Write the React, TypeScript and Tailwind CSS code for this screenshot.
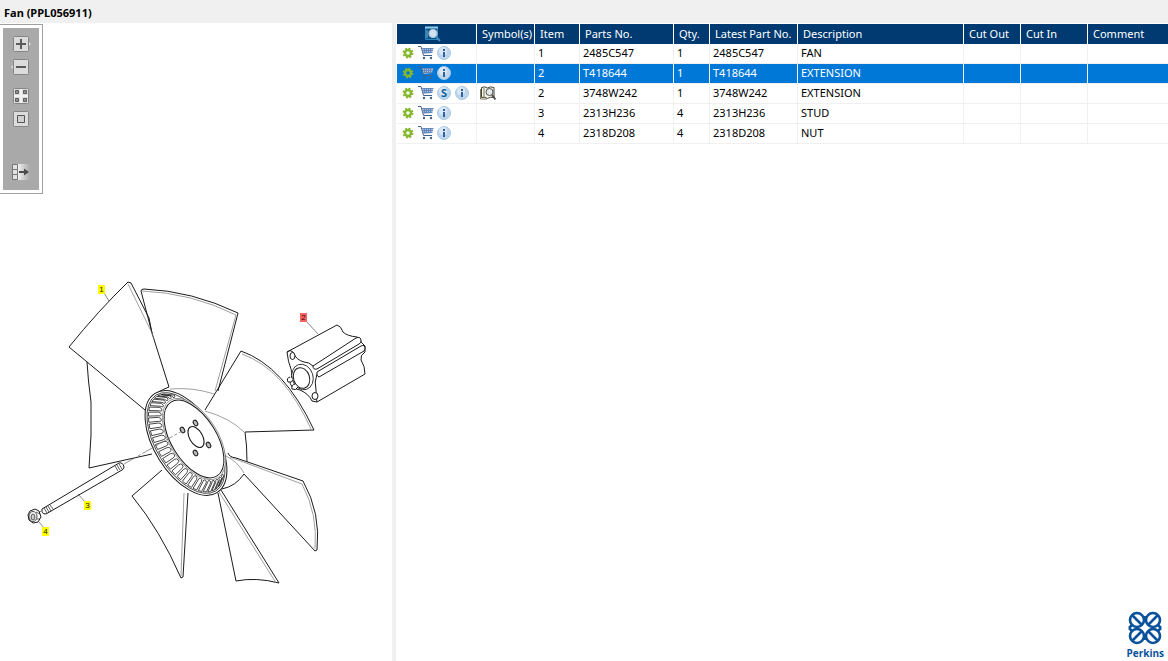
import {useState} from "react";

type Part = {
  item: string;
  partNo: string;
  qty: string;
  description: string;
  service?: boolean;
  symbol?: boolean;
};

const parts: Part[] = [
  {item: '1', partNo: '2485C547', qty: '1', description: 'FAN'},
  {item: '2', partNo: 'T418644', qty: '1', description: 'EXTENSION'},
  {item: '2', partNo: '3748W242', qty: '1', description: 'EXTENSION', service: true, symbol: true},
  {item: '3', partNo: '2313H236', qty: '4', description: 'STUD'},
  {item: '4', partNo: '2318D208', qty: '4', description: 'NUT'},
];

const toolButton = "block h-[18px] w-5 cursor-pointer";

function Tile() {
  return <rect x="2.5" y="1.5" width="15" height="15" rx="1" fill="#dcdcdc" stroke="#858585"/>;
}

function Toolbar() {
  return (
    <div className="absolute left-0 top-px border border-l-0 border-[#a0a0a0] bg-white p-[3px]">
      <div className="flex h-[162px] w-9 flex-col items-center bg-[#a9a9a9] pt-[7px]">
        <button type="button" aria-label="Zoom in" className={toolButton}>
          <svg width="20" height="18">
            <path d="M17 6l3 3-3 3z" fill="#dcdcdc"/>
            <Tile/>
            <path d="M5 9h10M10 4v10" stroke="#5a5a5a" strokeWidth="2"/>
          </svg>
        </button>
        <button type="button" aria-label="Zoom out" className={toolButton + " mt-[5px]"}>
          <svg width="20" height="18">
            <path d="M3 6L0 9l3 3z" fill="#dcdcdc"/>
            <Tile/>
            <path d="M5 9h10" stroke="#5a5a5a" strokeWidth="2"/>
          </svg>
        </button>
        <button type="button" aria-label="Fit to page" className={toolButton + " mt-[11px]"}>
          <svg width="20" height="18">
            <Tile/>
            <path d="M10 2v14M3 9h14" stroke="#f2f2f2" strokeWidth="2"/>
            <path d="M4.500 3.500h3v3h-3zM12.500 3.500h3v3h-3zM4.500 11.500h3v3h-3zM12.500 11.500h3v3h-3z" fill="#909090" stroke="#5f5f5f"/>
          </svg>
        </button>
        <button type="button" aria-label="Original size" className={toolButton + " mt-[5px]"}>
          <svg width="20" height="18">
            <Tile/>
            <path d="M6.500 5.500h7v7h-7z" fill="#d0d0d0" stroke="#555"/>
          </svg>
        </button>
        <button type="button" aria-label="Toggle list" className={toolButton + " mt-[35px]"}>
          <svg width="20" height="18">
            <defs>
              <linearGradient id="fade">
                <stop offset="0" stopColor="#f0f0f0"/>
                <stop offset="1" stopColor="#a9a9a9"/>
              </linearGradient>
            </defs>
            <path d="M7 1h12v16H7z" fill="url(#fade)"/>
            <path d="M1.500 1.500h5v5h-5zM1.500 6.500h5v5h-5zM1.500 11.500h5v5h-5z" fill="#e2e2e2" stroke="#777"/>
            <path d="M8 9h6" stroke="#4a4a4a" strokeWidth="2"/>
            <path d="M13 5.500L18 9l-5 3.500z" fill="#4a4a4a"/>
          </svg>
        </button>
      </div>
    </div>
  );
}

// point on an ellipse tilted like the hub, t in degrees from the long axis
function onEllipse(cx: number, cy: number, a: number, b: number, t: number) {
  const tilt = 58 * Math.PI / 180;
  const r = t * Math.PI / 180;
  const u = a * Math.cos(r);
  const v = b * Math.sin(r);
  return [cx + u * Math.cos(tilt) - v * Math.sin(tilt), cy + u * Math.sin(tilt) + v * Math.cos(tilt)];
}

function slot(t: number) {
  const p = (v: number[]) => v.map(n => n.toFixed(1)).join(' ');
  const outer = (d: number) => p(onEllipse(186, 443, 55, 28, t + d));
  const inner = (d: number) => p(onEllipse(193, 439, 49, 27, t + d));
  const tip = (d: number) => p(onEllipse(193.5, 439, 46.5, 24.5, t + d));
  return `M${outer(-2.8)}L${inner(-3)}Q${tip(-2.8)} ${tip(0)}Q${tip(2.8)} ${inner(3)}L${outer(2.8)}Z`;
}

const slots = Array.from({length: 26}, (_, i) => slot(-12 + i * 8.2));

function Callout({x, y, label, active}: {x: number; y: number; label: string; active?: boolean}) {
  return (
    <g>
      <rect x={x} y={y} width="7" height="9" fill={active ? '#f46464' : '#ff0'}/>
      <text x={x + 3.5} y={y + 7} textAnchor="middle" fill={active ? '#400' : '#220'}
            className="font-['Liberation_Sans',sans-serif] text-[8px]">{label}</text>
    </g>
  );
}

function Diagram() {
  return (
    <svg viewBox="0 23 392 638" preserveAspectRatio="xMinYMin" role="img" aria-label="Fan exploded view"
         className="block w-full" fill="none" stroke="#1a1a1a" strokeWidth="1" strokeLinejoin="round">
      {/* blades */}
      <path d="M145 410L69 347Q98 311 128 282L131 283L149 318L152 333L169 387Q155 392 148 402"/>
      <path d="M87 362Q88 380 91 402Q92 435 89 468L152 454"/>
      <path d="M152 333L141 291Q141 289 144 289Q192 291 238 313L218 391"/>
      <path d="M205 410L241 351Q284 366 314 430L245 432Q247 445 247 462"/>
      <path d="M228 453Q229 457 236 458L303 481Q321 513 317 550L315 551L244 474Q236 486 222 489"/>
      <path d="M218 493L236 581Q256 577 279 583L221 490"/>
      <path d="M162 470L132 496Q160 530 181 578L183 577L188 493"/>
      <g stroke="#777" strokeWidth="0.7">
        <path d="M128 284L151 331L154 339M142 291Q192 293 236 315L215 391M242 354Q284 369 311 429"/>
        <path d="M170 389Q193 387 214 394M205 411Q230 418 244 432M226 456Q238 462 244 473"/>
        <path d="M230 457L302 484Q318 514 315 549M219 492L276 583M184 493L181 576"/>
      </g>
      {/* hub */}
      <g transform="rotate(58 186 443)">
        <ellipse cx="186" cy="443" rx="58.500" ry="31.500" fill="#fff"/>
        <ellipse cx="186" cy="443" rx="56.500" ry="29.500" strokeWidth="0.7"/>
      </g>
      {slots.map((d, i) => <path key={i} d={d} strokeWidth="0.8"/>)}
      <g transform="rotate(58 194 439)">
        <ellipse cx="194" cy="439" rx="45.500" ry="24" fill="#fff" stroke="#777" strokeWidth="0.7"/>
        <ellipse cx="194" cy="439" rx="43.500" ry="22.500"/>
      </g>
      <ellipse cx="196" cy="437" rx="11.500" ry="6.500" transform="rotate(60 196 437)" strokeWidth="1.100"/>
      <g fill="#bbb">
        <ellipse cx="195.500" cy="423" rx="3" ry="2" transform="rotate(60 195.500 423)"/>
        <ellipse cx="182.500" cy="430" rx="3" ry="2" transform="rotate(60 182.500 430)"/>
        <ellipse cx="208.500" cy="445" rx="3" ry="2" transform="rotate(60 208.500 445)"/>
        <ellipse cx="195.500" cy="453" rx="3" ry="2" transform="rotate(60 195.500 453)"/>
      </g>
      <path d="M124 464L182 431" stroke="#666" strokeWidth="0.7" strokeDasharray="14 2 3 2"/>
      {/* stud and nut */}
      <path d="M42 509L119 463Q123 462 124 467Q124 469 122 470L46 514Q41 514 42 509Z" fill="#fff"/>
      <path d="M44 508l3 5M46 507l3 5M48 506l3 5M50 505l3 4M115 466l3 5M117 465l3 5M119 464l3 5" strokeWidth="0.7"/>
      <path d="M38 513L43 510" stroke="#888"/>
      <path d="M30 511L35 509L39 511L41 517L38 522L33 523L29 520L28 515Z" fill="#fff"/>
      <ellipse cx="33" cy="516.500" rx="4" ry="5" strokeWidth="0.8"/>
      <ellipse cx="33" cy="517" rx="2" ry="3" fill="#ccc" strokeWidth="0.7"/>
      <path d="M36 512L40 514M37 519L40 519" strokeWidth="0.7"/>
      {/* extension */}
      <path d="M287 352L337 325Q341 326 343 332Q347 336 357 337Q361 338 361 342L365 346V352Q360 355 361 360Q365 366 365 374L317 402L312 401Q309 394 300 390L293 388Q289 384 290 379Q293 377 291 369Q288 362 287 352Z" fill="#fff"/>
      <path d="M287 352Q290 349 293 352Q296 360 304 362Q309 362 313 366M317 374Q314 382 316 390Q316 398 317 402"/>
      <path d="M313 366L356 338Q361 336 361 341Q361 343 359 344L317 369Q313 370 313 366Z" fill="#fff"/>
      <path d="M317 372L361 346Q365 344 365 349L364 351L319 377Q316 376 317 372Z" fill="#fff"/>
      <ellipse cx="302.500" cy="377" rx="10.500" ry="13" transform="rotate(-18 302.500 377)" fill="#fff" strokeWidth="0.8"/>
      <ellipse cx="301.500" cy="378" rx="8" ry="10.500" transform="rotate(-18 301.500 378)"/>
      <ellipse cx="292.500" cy="356" rx="2.500" ry="3.500" fill="#fff"/>
      <ellipse cx="315" cy="396" rx="3" ry="3.500" fill="#fff"/>
      <path d="M290 377Q286 378 288 382Q292 383 293 380M295 384Q291 385 292 389Q296 391 298 387" fill="#fff"/>
      {/* leaders */}
      <path d="M104 293L109 301M306 321L318 334M78 494L85 502M39 522L44 528" stroke="#555" strokeWidth="0.7"/>
      <g stroke="none">
        <Callout x={98} y={285} label="1"/>
        <Callout x={300} y={313} label="2" active/>
        <Callout x={84} y={501} label="3"/>
        <Callout x={42} y={527} label="4"/>
      </g>
    </svg>
  );
}

function GearIcon() {
  return (
    <svg width="12" height="12" viewBox="0 0 12 12">
      <circle cx="6" cy="6" r="4.600" fill="none" stroke="#83b32c" strokeWidth="1.600" strokeDasharray="2 1.613"/>
      <circle cx="6" cy="6" r="3" fill="none" stroke="#83b92b" strokeWidth="2.400"/>
    </svg>
  );
}

function CartIcon() {
  return (
    <svg width="16" height="15" viewBox="0 0 16 15" fill="none">
      <path d="M4 3h11.500l-1.500 5L5.500 9z" fill="#a4badb"/>
      <path d="M4 3.500h11.500M5 5.500h10M5.500 7.500h9M6.500 3v5M8.500 3v5M10.500 3v5M12.500 3v5" stroke="#5d82b6" strokeWidth="0.800"/>
      <path d="M0 1.500h3L5.500 10.500H14" stroke="#44618c"/>
      <circle cx="6" cy="13" r="1.200" fill="#44618c"/>
      <circle cx="13" cy="13" r="1.200" fill="#44618c"/>
    </svg>
  );
}

function BadgeIcon({letter}: {letter: string}) {
  return (
    <svg width="14" height="14" viewBox="0 0 14 14">
      <circle cx="7" cy="7" r="6.500" fill="#bdd6eb" stroke="#a9c7e2"/>
      <circle cx="6" cy="5" r="4" fill="#d9e8f5"/>
      {letter === 'i'
        ? <path d="M6 3h2v2H6zM6 6h2v5H6z" fill="#31619e"/>
        : <text x="7" y="11" textAnchor="middle" fill="#0f629b"
                className="font-['Noto_Sans',sans-serif] text-[11px] font-bold">S</text>}
    </svg>
  );
}

function BookIcon() {
  return (
    <svg width="16" height="16" viewBox="0 0 16 16" fill="none">
      <path d="M1.500 2.500Q5 1 7.500 3Q10 1 14 2.500V12.500Q10 11.500 7.500 13.500Q5 11.500 1.500 12.500Z" fill="#f4f3e8" stroke="#45453a"/>
      <path d="M.5 4v10H7M4 3v9" stroke="#77775c"/>
      <circle cx="9.500" cy="7" r="3.500" fill="#e4e9eb" stroke="#555"/>
      <path d="M12 10l3.500 4.500" stroke="#444" strokeWidth="1.800"/>
    </svg>
  );
}

function PageSearchIcon() {
  return (
    <svg width="16" height="16" viewBox="0 0 16 16" fill="none">
      <path d="M.5 1.500h12v12H.5z" fill="#0d5288" stroke="#2b87bd"/>
      <path d="M0 1.500h13" stroke="#8fd0ee" strokeWidth="2"/>
      <path d="M1 5h2M1 7h2M1 9h2M1 11h2" stroke="#79b6dc"/>
      <circle cx="8" cy="7.500" r="4" fill="#d3e3ee" stroke="#aac7dc" strokeWidth="1.200"/>
      <path d="M11 10.500l4 4.500" stroke="#408bc0" strokeWidth="2"/>
    </svg>
  );
}

function PerkinsLogo() {
  return (
    <div className="flex flex-col items-center text-[#0a529c]">
      <svg width="34" height="34" viewBox="0 0 34 34" fill="none" stroke="currentColor" strokeWidth="2.6">
        <circle cx="9" cy="9" r="7"/>
        <circle cx="25" cy="9" r="7"/>
        <circle cx="9" cy="25" r="7"/>
        <circle cx="25" cy="25" r="7"/>
        <path d="M4 4L14 14M30 4L20 14M4 30L14 20M30 30L20 20"/>
        <path d="M1 17L4 14M1 17l3 3M33 17l-3-3M33 17l-3 3M17 5v6M17 23v6"/>
      </svg>
      <span className="font-['Open_Sans',sans-serif] text-[10px] font-bold leading-4">Perkins</span>
    </div>
  );
}

const th = "border-r border-white pl-[5px] text-left font-normal";
const td = "border-b border-r border-[#f0f0f0] pb-[2px] pl-[3px]";

export default function App() {
  const [selected, setSelected] = useState(1);

  return (
    <div className="flex h-screen flex-col bg-white font-['Noto_Sans',sans-serif] text-[11px] leading-4 text-black">
      <header className="h-[23px] bg-[#f0f0f0] pl-1 pt-[5px]">
        <h1 className="font-bold">Fan (PPL056911)</h1>
      </header>
      <div className="flex min-h-0 flex-1">
        <section className="relative w-[392px] shrink-0 overflow-hidden">
          <Diagram/>
          <Toolbar/>
        </section>
        <div className="w-1 shrink-0 bg-[#f0f0f0]"/>
        <main className="flex min-w-0 flex-1 flex-col justify-between pl-px pt-px">
          <table className="w-full table-fixed border-separate border-spacing-0 whitespace-nowrap">
            <thead>
              <tr className="h-5 bg-[#003a70] text-white">
                <th className="w-20 border-r border-white" aria-label="Actions">
                  <div className="flex justify-center pr-2"><PageSearchIcon/></div>
                </th>
                <th className={th + " w-[58px]"}>Symbol(s)</th>
                <th className={th + " w-[45px]"}>Item</th>
                <th className={th + " w-[94px]"}>Parts No.</th>
                <th className={th + " w-9"}>Qty.</th>
                <th className={th + " w-[88px]"}>Latest Part No.</th>
                <th className={th + " w-[166px]"}>Description</th>
                <th className={th + " w-[57px]"}>Cut Out</th>
                <th className={th + " w-[67px]"}>Cut In</th>
                <th className="pl-[5px] text-left font-normal">Comment</th>
              </tr>
            </thead>
            <tbody>
              {parts.map((part, i) => (
                <tr key={part.partNo} onClick={() => setSelected(i)}
                    className={i === selected ? "h-5 bg-[#0078d7] text-white" : "h-5"}>
                  <td className="border-b border-r border-[#f0f0f0] pb-[2px] pl-[5px]">
                    <div className="flex items-center">
                      <button type="button" aria-label="Options"><GearIcon/></button>
                      <button type="button" aria-label="Add to cart" className="ml-1"><CartIcon/></button>
                      {part.service && <button type="button" aria-label="Service" className="ml-[3px]"><BadgeIcon letter="S"/></button>}
                      <button type="button" aria-label="Information" className={part.service ? "ml-1" : "ml-[3px]"}><BadgeIcon letter="i"/></button>
                    </div>
                  </td>
                  <td className={td}>{part.symbol && <BookIcon/>}</td>
                  <td className={td}>{part.item}</td>
                  <td className={td}>{part.partNo}</td>
                  <td className={td}>{part.qty}</td>
                  <td className={td}>{part.partNo}</td>
                  <td className={td}>{part.description}</td>
                  <td className={td}/>
                  <td className={td}/>
                  <td className="border-b border-[#f0f0f0]"/>
                </tr>
              ))}
            </tbody>
          </table>
          <footer className="flex justify-end pr-1">
            <PerkinsLogo/>
          </footer>
        </main>
      </div>
    </div>
  );
}
